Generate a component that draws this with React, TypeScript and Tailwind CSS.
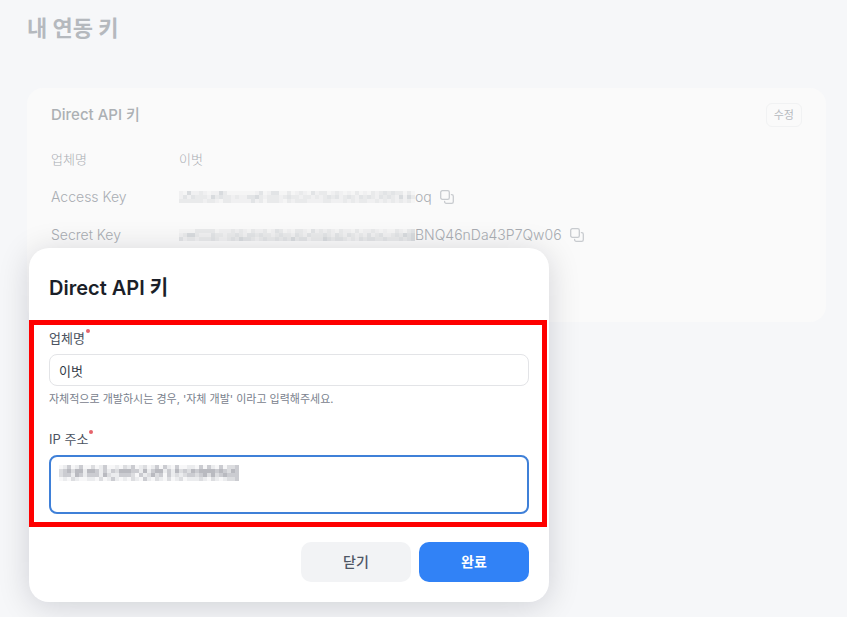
import { useState, FormEvent } from "react";

const KEY_SHADES = ["", "#f5f5f5", "#f0f0f1", "#e9eaeb", "#e2e4e6", "#d8dbde"];
const IP_SHADES = ["", "#f7f7f8", "#ebecee", "#dcdde0", "#cbccd1", "#b9bac0"];

// One digit per 4px cell, 0 is empty and 5 is the darkest
const ACCESS_KEY_MASK = [
  "21522321225311111112412441131232142331232121312132343433131",
  "24243332534332322445323332343323323234342343243432434325253",
  "33333323321332222242313332132333222233222323233223232323231",
];
const SECRET_KEY_MASK = [
  "11113333312223232132231243121332142323213221312232121132134",
  "23553222433233432443433234332432433343243243232423422343545",
  "42332333432234354432343343435344233354344323243443343334345",
];
const IP_MASK = [
  "124124113124112132412312414214112214142141334",
  "345355255424243555442524552425343545555454354",
  "344254244425322444314235341423234434535345444",
  "121321122131242121321421321312312223213212334",
];

interface MosaicProps {
  rows: string[];
  shades: string[];
}

const Mosaic = ({ rows, shades }: MosaicProps) => (
  <svg
    width={rows[0].length * 4}
    height={rows.length * 4}
    shapeRendering="crispEdges"
    className="shrink-0"
    aria-hidden="true"
  >
    {rows.map((row, y) =>
      row
        .split("")
        .map((level, x) => (
          <rect
            key={`${x}-${y}`}
            x={x * 4}
            y={y * 4}
            width="4"
            height="4"
            fill={shades[Number(level)]}
          />
        )),
    )}
  </svg>
);

const CopyButton = ({ label }: { label: string }) => (
  <button type="button" aria-label={label} className="ml-2 shrink-0">
    <svg
      width="14"
      height="14"
      viewBox="0 0 14 14"
      fill="none"
      stroke="#c8cbcf"
      strokeWidth="1.3"
      strokeLinecap="round"
    >
      <rect x="0.7" y="0.7" width="8.6" height="8.6" rx="1.6" />
      <path d="M11.4 4.6h.3a1.6 1.6 0 0 1 1.6 1.6v5.5a1.6 1.6 0 0 1-1.6 1.6H6.2a1.6 1.6 0 0 1-1.6-1.6v-.3" />
    </svg>
  </button>
);

const RequiredMark = () => (
  <span className="mt-px ml-px size-1 rounded-full bg-[#e5636b]" />
);

const App: React.FC = () => {
  const [company, setCompany] = useState("이벗");
  const [ip, setIp] = useState("");

  const handleSubmit = (e: FormEvent) => {
    e.preventDefault();
  };

  return (
    <div className="relative min-h-screen bg-[#f6f7f9] font-['Inter','Noto_Sans_CJK_KR',sans-serif]">
      <main className="pt-3 pr-[21px] pl-[27px] text-[#b5b9be]">
        <h1 className="mb-11 text-[22px] leading-8 font-bold">내 연동 키</h1>

        <section className="rounded-2xl bg-[#fafafa] px-6 pt-[15px] pb-[75px]">
          <div className="mb-5 flex items-center justify-between">
            <h2 className="text-[15px] leading-6 font-medium text-[#acb0b4]">
              Direct API 키
            </h2>
            <button
              type="button"
              className="h-6 rounded-md border border-[#f1f2f3] px-[7px] text-[11px] leading-5"
            >
              수정
            </button>
          </div>

          <dl className="grid grid-cols-[128px_1fr] gap-y-[14px] text-sm leading-6 font-light text-[#a9adb3]">
            <dt className="text-[13px] leading-6">업체명</dt>
            <dd className="text-[13px] leading-6">이벗</dd>
            <dt>Access Key</dt>
            <dd className="flex items-center">
              <Mosaic rows={ACCESS_KEY_MASK} shades={KEY_SHADES} />
              <span>oq</span>
              <CopyButton label="Access Key 복사" />
            </dd>
            <dt>Secret Key</dt>
            <dd className="flex items-center">
              <Mosaic rows={SECRET_KEY_MASK} shades={KEY_SHADES} />
              <span>BNQ46nDa43P7Qw06</span>
              <CopyButton label="Secret Key 복사" />
            </dd>
          </dl>
        </section>
      </main>

      {/* 연동 키 수정 모달 */}
      <div
        role="dialog"
        aria-labelledby="dialog-title"
        className="absolute top-[248px] left-[29px] w-[520px] max-w-full rounded-[20px] bg-white px-5 pt-6 pb-5 shadow-[0_4px_32px_rgba(0,12,30,0.16)]"
      >
        <h2
          id="dialog-title"
          className="mb-6 text-xl leading-8 font-semibold text-[#1b1f29]"
        >
          Direct API 키
        </h2>

        <form onSubmit={handleSubmit}>
          <div className="relative flex flex-col gap-[21px]">
            <div>
              <label
                htmlFor="company"
                className="mb-[6px] flex text-[13px] leading-5 text-[#4b5361]"
              >
                업체명
                <RequiredMark />
              </label>
              <input
                id="company"
                type="text"
                value={company}
                onChange={(e) => setCompany(e.target.value)}
                className="block h-8 w-full rounded-lg border border-[#e3e4e7] px-[9px] text-[13px] text-[#333b48] outline-none"
              />
              <p className="mt-1 text-[11px] leading-[18px] text-[#79818d]">
                자체적으로 개발하시는 경우, '자체 개발' 이라고 입력해주세요.
              </p>
            </div>

            <div>
              <label
                htmlFor="ip"
                className="mb-[6px] flex text-[13px] leading-5 text-[#4b5361]"
              >
                IP 주소
                <RequiredMark />
              </label>
              <div className="relative">
                <textarea
                  id="ip"
                  value={ip}
                  onChange={(e) => setIp(e.target.value)}
                  className="block h-[59px] w-full resize-none rounded-lg border-2 border-[#3f80d8] px-2 py-1 text-[13px] outline-none"
                />
                <div className="pointer-events-none absolute top-[10px] left-[10px]">
                  <Mosaic rows={IP_MASK} shades={IP_SHADES} />
                </div>
              </div>
            </div>

            {/* 입력 영역 강조 */}
            <div className="pointer-events-none absolute -top-2 -right-[18px] -bottom-[13px] -left-5 border-[5px] border-[#fe0000]" />
          </div>

          <div className="mt-7 flex justify-end gap-2">
            <button
              type="button"
              className="h-10 w-[110px] rounded-[10px] bg-[#f2f3f5] text-sm font-medium text-[#4e5665]"
            >
              닫기
            </button>
            <button
              type="submit"
              className="h-10 w-[110px] rounded-[10px] bg-[#3182f6] text-sm font-bold text-white"
            >
              완료
            </button>
          </div>
        </form>
      </div>
    </div>
  );
};

export default App;
